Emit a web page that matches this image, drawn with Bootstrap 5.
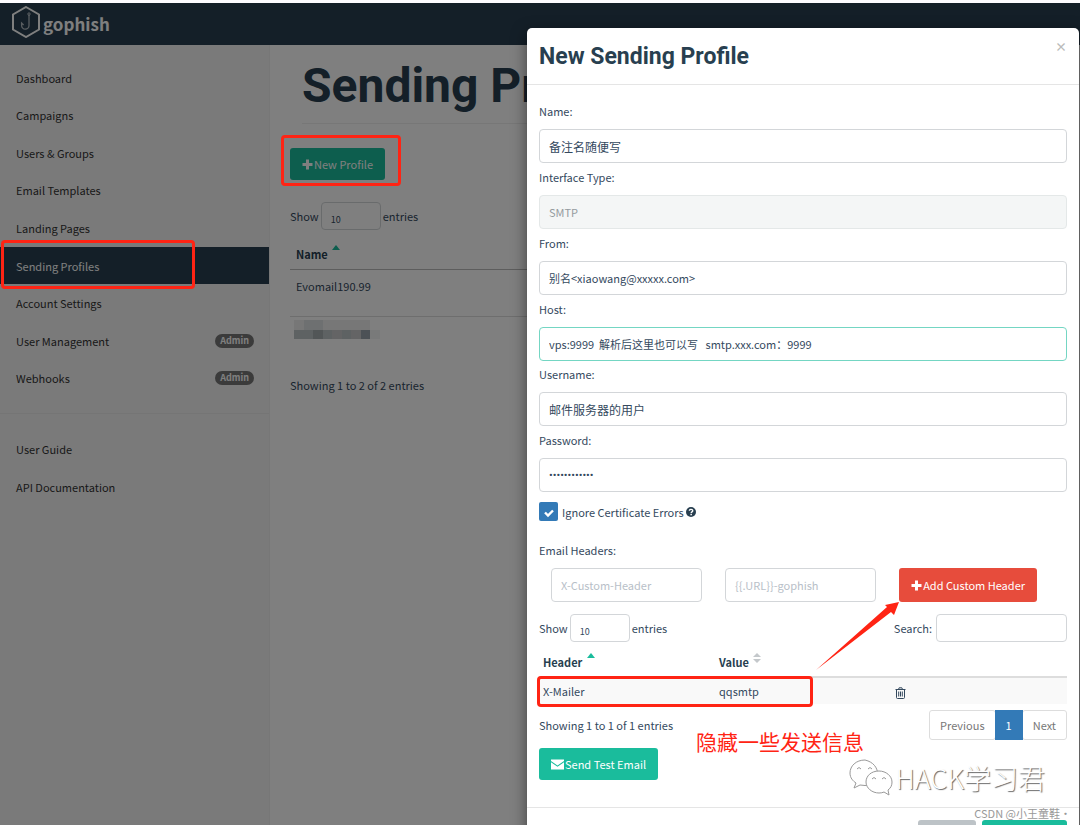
<!DOCTYPE html>
<html lang="en">
<head>
<meta charset="utf-8">
<meta name="viewport" content="width=device-width, initial-scale=1">
<title>Gophish - Sending Profiles</title>
<link href="https://cdn.jsdelivr.net/npm/bootstrap@5.3.0/dist/css/bootstrap.min.css" rel="stylesheet">
<style>
  :root { --navy: #283f50; --ink: #34495e; --green: #1abc9c; --mark-red: #ff2414; }
  body { font: 11px/18px "Noto Sans CJK SC", sans-serif; color: var(--ink); background: #fff; height: 100vh; overflow: hidden; border-top: 3px solid #fdfcff; }
  .page-shell { height: 100%; }
  .topbar { background: var(--navy); height: 42px; padding: 0 12px; gap: 3px; }
  .topbar a { color: #fff; font-size: 17px; line-height: 28px; }
  .side { background: #f5f5f5; width: 270px; border-right: 1px solid #eee; padding-top: 14px; }
  .side ul { display: grid; grid-auto-rows: 1fr; }
  .side-main { height: 338px; }
  .side-docs { height: 76px; }
  .side a { color: #333; height: 100%; padding: 0 15px 0 16px; }
  .side a.active { background: var(--navy); color: #fff; }
  .side hr { margin: 16px 0; border-color: #ccc; }
  .side .badge { background: #777; font-size: 9px; line-height: 14px; padding: 0 5px; }
  .main-area { padding: 12px 30px 0 20px; }
  h1, h2 { font-family: Roboto, sans-serif; font-weight: 700; color: var(--navy); }
  h1 { font-size: 48px; line-height: 58px; margin: 0 0 24px 12px; padding-bottom: 8px; border-bottom: 1px solid #eee; white-space: nowrap; }
  .btn { font-size: 11px; line-height: 18px; padding: 7px 12px; border: 0; border-radius: 3px; color: #fff; white-space: nowrap; gap: 1px; --bs-btn-color: #fff; }
  .btn-green, .btn-green:hover { background: var(--green); }
  .btn-red, .btn-red:hover { background: #e74c3c; }
  .btn-gray, .btn-gray:hover { background: #bdc3c7; }
  .new-wrap { margin-bottom: 22px; }
  .length-row { height: 28px; }
  .len-select { width: 60px; height: 28px; margin: 0 2px; padding: 8px 9px 0; border: 1px solid #d3d6d9; border-radius: 4px; background: #fff; color: var(--ink); font-size: 9px; appearance: none; }
  .grid-table { width: 100%; margin: 0; color: var(--ink); }
  .grid-table th { color: var(--navy); font-weight: 700; border-bottom: 2px solid #ddd; }
  .grid-table th svg { vertical-align: top; margin-left: 2px; }
  .profiles th { padding: 11px 6px 6px; border-bottom-width: 1px; border-bottom-color: #bbb; }
  .profiles td { padding: 7px 6px 0; height: 47px; border-top: 1px solid #ddd; vertical-align: top; }
  .profiles td.masked { padding: 2px 4px; }
  .shade { position: absolute; inset: 3px 0 0; background: rgba(0,0,0,.5); z-index: 1040; }
  .dialog { position: absolute; top: 28px; right: 1px; width: 100%; max-width: 552px; background: #fff; border-radius: 5px 5px 0 0; box-shadow: 0 5px 15px rgba(0,0,0,.5); z-index: 1050; }
  .dialog-head { padding: 12px; height: 57px; border-bottom: 1px solid #e5e5e5; }
  .dialog-head h2 { font-size: 23px; line-height: 34px; margin: 0; }
  .close-x { background: none; border: 0; padding: 0; color: #bbb; font-size: 12px; line-height: 14px; font-weight: 700; }
  .dialog-body { padding: 17px 12px 27px; }
  .field-stack { display: grid; grid-auto-rows: 1fr; height: 395px; }
  .field-stack label { display: block; margin-bottom: 9px; }
  .form-control { height: 34px; font-size: 11px; line-height: 18px; padding: 6px 9px; color: var(--ink); border: 1px solid #d3d6d9; border-radius: 4px; }
  .form-control.han { font-size: 12px; }
  .form-control[type=password] { font-family: Roboto, sans-serif; }
  .form-control:disabled { background: #f4f6f6; color: #959b9f; border-color: #e4e8e8; }
  .form-control::placeholder { color: #b8c0c8; }
  .form-control.active-field { border-color: #74d6c3; }
  .tick { appearance: none; width: 19px; height: 19px; border-radius: 2px; margin: 0; background: #337ab7 url("data:image/svg+xml,%3Csvg xmlns='http://www.w3.org/2000/svg' viewBox='0 0 19 19'%3E%3Cpath d='M6 10.5l3 3 5-5' fill='none' stroke='%23fff' stroke-width='2.4'/%3E%3C/svg%3E"); }
  .tick-row { margin-top: 5px; gap: 4px; }
  .tick-row label { margin-right: -2px; }
  .new-header { padding: 0 30px 0 12px; gap: 23px; margin: 9px 0 12px; }
  .new-header .form-control { flex: 1 1 0; min-width: 0; }
  .search-box { width: 131px; height: 28px; }
  .headers-table { table-layout: fixed; }
  .headers-table th { padding: 11px 4px 5px; }
  .headers-table td { padding: 4px; background: #f9f9f9; height: 27px; }
  .page-link { font-size: 11px; line-height: 18px; padding: 5px 10px; color: #777; border-color: #ddd; }
  .page-item:first-child .page-link, .page-item:last-child .page-link { border-radius: 3px; }
  .page-item.active .page-link { background: #337ab7; border-color: #337ab7; color: #fff; }
  .info-row { padding-top: 6px; }
  .dialog-foot { border-top: 1px solid #e5e5e5; padding: 12px; gap: 6px; }
  .dialog-foot .btn { height: 32px; }
  .mark-box { position: absolute; border: 3px solid var(--mark-red); border-radius: 4px; z-index: 1100; pointer-events: none; }
  .mark-nav { inset: -7px 74px -5px 1px; }
  .mark-new { inset: -13px -16px -6px -9px; }
  .mark-row { inset: auto 254px -3px -2px; height: 31px; }
  .mark-arrow { position: absolute; right: 167px; top: 33px; }
  .mark-note { position: absolute; left: 157px; top: 22px; color: var(--mark-red); font-size: 21px; line-height: 30px; white-space: nowrap; }
  .wm { position: absolute; right: 34px; top: 730px; font-size: 27px; line-height: 40px; font-weight: 300; color: #fff; text-shadow: 1px 1px 1px #666; gap: 3px; white-space: nowrap; }
  .wm-small { position: absolute; right: 8px; top: 776px; color: #999; white-space: nowrap; }
</style>
</head>
<body>
<div class="page-shell d-flex flex-column">
  <nav class="topbar d-flex align-items-center">
    <svg width="28" height="32" viewBox="0 0 28 32" fill="none" stroke="#fff" aria-hidden="true" class="mb-1"><path d="M14 1l13 7.500v15L14 31 1 23.500v-15z" stroke-width="2"/><path d="M17 9v10.500a3.700 3.700 0 0 1-7.400 0V17l2 2" stroke-width="1.300" opacity=".65"/><circle cx="17" cy="8" r="1.200" opacity=".65"/></svg>
    <a class="fw-bold text-decoration-none" href="#">gophish</a>
  </nav>
  <div class="d-flex flex-fill">
    <aside class="side flex-shrink-0">
      <ul class="side-main list-unstyled m-0">
        <li><a class="d-flex align-items-center text-decoration-none" href="#">Dashboard</a></li>
        <li><a class="d-flex align-items-center text-decoration-none" href="#">Campaigns</a></li>
        <li><a class="d-flex align-items-center text-decoration-none" href="#">Users &amp; Groups</a></li>
        <li><a class="d-flex align-items-center text-decoration-none" href="#">Email Templates</a></li>
        <li><a class="d-flex align-items-center text-decoration-none" href="#">Landing Pages</a></li>
        <li class="position-relative"><a class="active d-flex align-items-center text-decoration-none" href="#">Sending Profiles</a><span class="mark-box mark-nav"></span></li>
        <li><a class="d-flex align-items-center text-decoration-none" href="#">Account Settings</a></li>
        <li><a class="d-flex align-items-center justify-content-between text-decoration-none" href="#">User Management <span class="badge rounded-pill">Admin</span></a></li>
        <li><a class="d-flex align-items-center justify-content-between text-decoration-none" href="#">Webhooks <span class="badge rounded-pill">Admin</span></a></li>
      </ul>
      <hr>
      <ul class="side-docs list-unstyled m-0">
        <li><a class="d-flex align-items-center text-decoration-none" href="#">User Guide</a></li>
        <li><a class="d-flex align-items-center text-decoration-none" href="#">API Documentation</a></li>
      </ul>
    </aside>
    <main class="main-area flex-fill">
      <h1>Sending Profiles</h1>
      <div class="new-wrap d-inline-block position-relative">
        <button type="button" class="btn btn-green d-flex align-items-center"><svg width="11" height="11" viewBox="0 0 11 11" fill="#fff" aria-hidden="true"><path d="M4 .5h3v3.500h3.500v3H7v3.500H4V7H.5V4H4z"/></svg>New Profile</button>
        <span class="mark-box mark-new"></span>
      </div>
      <div class="length-row d-flex align-items-center">
        <label for="profile-len">Show</label>
        <select id="profile-len" class="len-select"><option>10</option><option>25</option></select>
        <span>entries</span>
      </div>
      <table class="grid-table profiles mt-1">
        <thead><tr><th>Name <svg width="8" height="5" viewBox="0 0 8 5" aria-hidden="true"><path d="M0 5l4-5 4 5z" fill="#1abc9c"/></svg></th></tr></thead>
        <tbody>
          <tr><td>Evomail190.99</td></tr>
          <tr><td class="masked"><svg width="86" height="20" viewBox="0 0 86 20" shape-rendering="crispEdges" aria-hidden="true"><path fill="#eee" d="M0 0h76v10H0z"/><path fill="#dde0e3" d="M10 0h19v10H10z"/><path fill="#bcc4c6" d="M0 10h76v9H0z"/><path fill="#a4adae" d="M19 10h10v9H19z"/><path fill="#c9c9ca" d="M38 10h10v9H38zM57 10h10v9H57z"/><path fill="#99a2ac" d="M67 10h9v9h-9z"/><path fill="#f2f4f4" d="M76 10h10v9H76z"/></svg></td></tr>
        </tbody>
      </table>
      <p class="mt-2 pt-1">Showing 1 to 2 of 2 entries</p>
    </main>
  </div>
</div>

<div class="shade"></div>

<section class="dialog" role="dialog" aria-labelledby="dialog-title">
  <header class="dialog-head d-flex justify-content-between align-items-start">
    <h2 id="dialog-title">New Sending Profile</h2>
    <button type="button" class="close-x" aria-label="Close">×</button>
  </header>
  <form class="dialog-body">
    <div class="field-stack">
      <div><label for="f-name">Name:</label><input id="f-name" class="form-control han" type="text" value="备注名随便写"></div>
      <div><label for="f-type">Interface Type:</label><input id="f-type" class="form-control" type="text" value="SMTP" disabled></div>
      <div><label for="f-from">From:</label><input id="f-from" class="form-control" type="text" value="别名&lt;xiaowang@xxxxx.com&gt;"></div>
      <div><label for="f-host">Host:</label><input id="f-host" class="form-control active-field" type="text" value="vps:9999  解析后这里也可以写   smtp.xxx.com：9999"></div>
      <div><label for="f-user">Username:</label><input id="f-user" class="form-control han" type="text" value="邮件服务器的用户"></div>
      <div><label for="f-pass">Password:</label><input id="f-pass" class="form-control" type="password" value="xxxxxxxxxxxx"></div>
    </div>
    <div class="tick-row d-flex align-items-center">
      <input id="f-cert" class="tick" type="checkbox" checked>
      <label for="f-cert">Ignore Certificate Errors</label>
      <svg width="10" height="10" viewBox="0 0 10 10" aria-hidden="true"><circle cx="5" cy="5" r="5" fill="#283f50"/><path d="M3.300 3.800C3.400 1.800 6.900 1.900 6.700 3.900 6.600 4.900 5.200 4.900 5.200 6" fill="none" stroke="#fff" stroke-width="1.400"/><path d="M4.400 6.800h1.500v1.400H4.400z" fill="#fff"/></svg>
    </div>
    <label class="d-block mt-3 pt-1" for="f-header">Email Headers:</label>
    <div class="new-header d-flex">
      <input id="f-header" class="form-control" type="text" placeholder="X-Custom-Header">
      <input class="form-control" type="text" placeholder="{{.URL}}-gophish" aria-label="Header value">
      <button type="button" class="btn btn-red d-flex align-items-center"><svg width="11" height="11" viewBox="0 0 11 11" fill="#fff" aria-hidden="true"><path d="M4 .5h3v3.500h3.500v3H7v3.500H4V7H.5V4H4z"/></svg>Add Custom Header</button>
    </div>
    <div class="length-row d-flex align-items-center">
      <label for="header-len">Show</label>
      <select id="header-len" class="len-select"><option>10</option><option>25</option></select>
      <span>entries</span>
      <label class="ms-auto me-1" for="f-search">Search:</label>
      <input id="f-search" class="form-control search-box" type="search">
    </div>
    <div class="position-relative">
      <table class="grid-table headers-table">
        <thead><tr>
          <th>Header <svg width="8" height="5" viewBox="0 0 8 5" aria-hidden="true"><path d="M0 5l4-5 4 5z" fill="#1abc9c"/></svg></th>
          <th>Value <svg width="8" height="10" viewBox="0 0 8 10" aria-hidden="true"><path d="M0 4l4-4 4 4zM0 6h8l-4 4z" fill="#c4c8cb"/></svg></th>
          <th></th>
        </tr></thead>
        <tbody><tr>
          <td>X-Mailer</td><td>qqsmtp</td>
          <td><svg width="11" height="13" viewBox="0 0 11 13" class="align-middle" fill="none" stroke="#34495e" aria-hidden="true"><path d="M.5 2.500h10M3.500 2.500l.6-1.700h2.800l.6 1.700M1.500 2.500v8q0 1 1 1h6q1 0 1-1v-8M3.700 4.500v5M5.500 4.500v5M7.300 4.500v5"/></svg></td>
        </tr></tbody>
      </table>
      <span class="mark-box mark-row"></span>
      <svg class="mark-arrow" width="1" height="1" aria-hidden="true" overflow="visible"><path d="M-83 -5L-12 -68-14 -70 0 -73-5 -60-8 -63z" fill="#ff2414"/></svg>
    </div>
    <div class="position-relative">
      <div class="info-row d-flex justify-content-between align-items-center">
        <span>Showing 1 to 1 of 1 entries</span>
        <ul class="pagination m-0">
          <li class="page-item"><a class="page-link" href="#">Previous</a></li>
          <li class="page-item active"><a class="page-link" href="#">1</a></li>
          <li class="page-item"><a class="page-link" href="#">Next</a></li>
        </ul>
      </div>
      <span class="mark-note">隐藏一些发送信息</span>
    </div>
    <button type="button" class="btn btn-green d-flex align-items-center mt-2"><svg width="13" height="11" viewBox="0 0 13 11" aria-hidden="true"><path d="M0 .5h13v1.500L6.500 6.500 0 2zM0 3.300l6.500 4.500L13 3.300v7.200H0z" fill="#fff"/></svg>Send Test Email</button>
  </form>
  <footer class="dialog-foot d-flex justify-content-end">
    <button type="button" class="btn btn-gray">Cancel</button>
    <button type="button" class="btn btn-green">Save Profile</button>
  </footer>
  <div class="wm d-flex align-items-center">
    <svg width="44" height="38" viewBox="0 0 44 38" fill="#fff" stroke="#999" aria-hidden="true"><path d="M16 1C7 1 1 7 1 14c0 5 3 8 6 10l-2 5 6-3q5 1 10 0C31 24 33 5 16 1z"/><path d="M30 12c-8 0-13 5-13 11s6 11 13 11q3 0 5-1l5 3-1-5c3-2 4-5 4-8 0-6-6-11-13-11z"/><path d="M8 10q2-3 4 0M19 10q2-3 4 0M23 20q2-3 4 0M33 20q2-3 4 0"/></svg>
    <span>HACK学习君</span>
  </div>
  <span class="wm-small">CSDN @小王童鞋·</span>
</section>
<script src="https://cdn.jsdelivr.net/npm/bootstrap@5.3.0/dist/js/bootstrap.bundle.min.js"></script>
</body>
</html>
